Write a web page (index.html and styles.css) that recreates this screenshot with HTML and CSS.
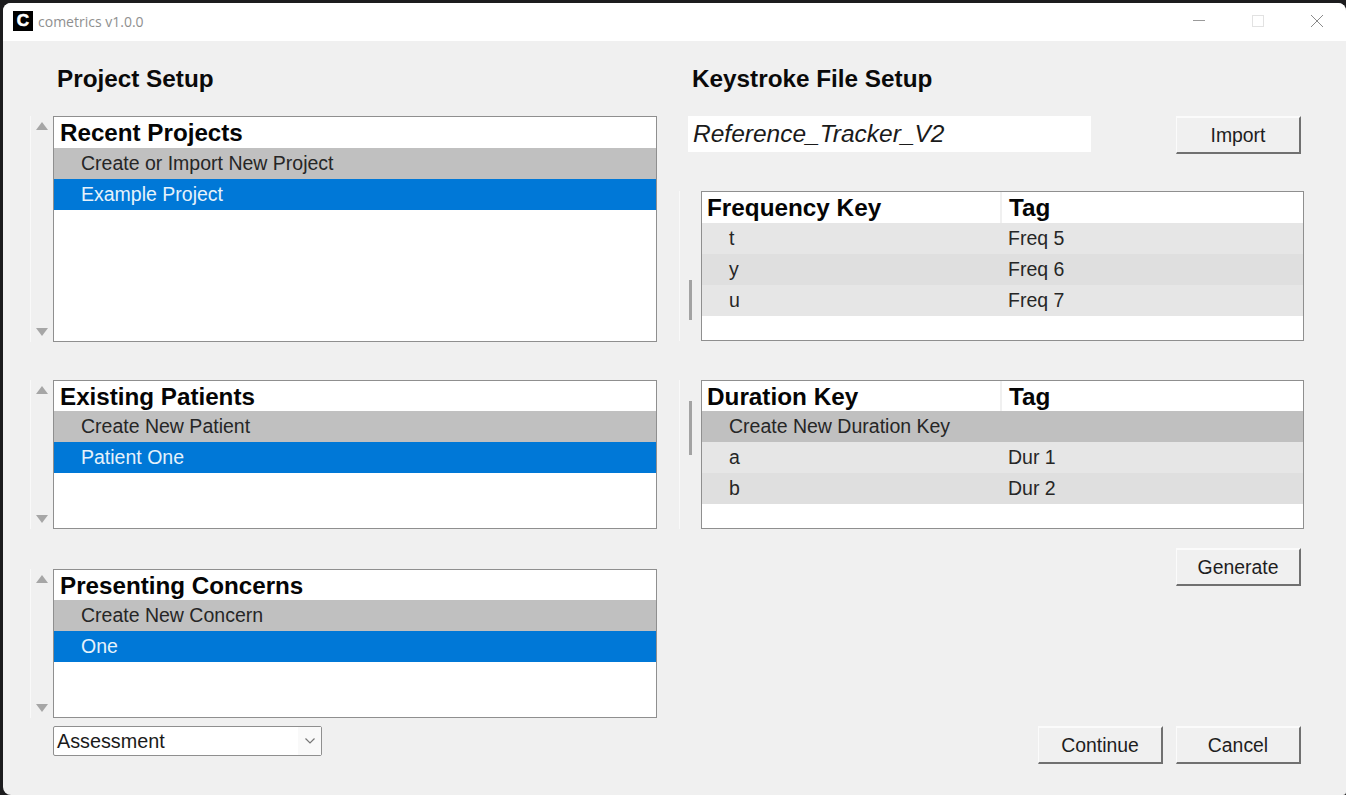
FILE: index.html
```html
<!DOCTYPE html>
<html lang="en">
<head>
<meta charset="utf-8">
<title>cometrics v1.0.0</title>
<link rel="stylesheet" href="styles.css">
</head>
<body>
<div class="window">
  <header class="titlebar">
    <div class="app-icon"><span class="app-letter">C</span></div>
    <span class="app-title">cometrics v1.0.0</span>
    <div class="controls">
      <svg class="ctl" width="46" height="38" viewBox="0 0 46 38"><path d="M17 18.5H29" stroke="#9a9a9a" fill="none"/></svg>
      <svg class="ctl" width="46" height="38" viewBox="0 0 46 38"><rect x="17.5" y="13.5" width="11" height="11" stroke="#e2e2e2" fill="none"/></svg>
      <svg class="ctl" width="46" height="38" viewBox="0 0 46 38"><path d="M17 13L29 25M29 13L17 25" stroke="#8a8a8a" fill="none"/></svg>
    </div>
  </header>
  <main class="content">
    <section class="col-left">
      <h2 class="heading heading-left">Project Setup</h2>
      <div class="list-row h226">
        <div class="arrows"><i class="up"></i><i class="down"></i></div>
        <div class="panel">
          <div class="head">Recent Projects</div>
          <div class="row grey">Create or Import New Project</div>
          <div class="row blue">Example Project</div>
        </div>
      </div>
      <div class="list-row h149">
        <div class="arrows"><i class="up"></i><i class="down"></i></div>
        <div class="panel">
          <div class="head short">Existing Patients</div>
          <div class="row grey">Create New Patient</div>
          <div class="row blue">Patient One</div>
        </div>
      </div>
      <div class="list-row h149 gap40">
        <div class="arrows"><i class="up"></i><i class="down"></i></div>
        <div class="panel">
          <div class="head short">Presenting Concerns</div>
          <div class="row grey">Create New Concern</div>
          <div class="row blue">One</div>
        </div>
      </div>
      <div class="select">
        <span class="select-text">Assessment</span>
        <span class="select-btn"><svg width="12" height="8" viewBox="0 0 12 8"><path d="M1.5 1.5L6 6L10.500 1.5" stroke="#777" stroke-width="1.200" fill="none"/></svg></span>
      </div>
    </section>
    <section class="col-right">
      <h2 class="heading">Keystroke File Setup</h2>
      <div class="file-row">
        <div class="file-name">Reference_Tracker_V2</div>
        <button class="btn">Import</button>
      </div>
      <div class="table-row freq">
        <div class="vscroll"><i class="thumb thumb-freq"></i></div>
        <div class="panel table">
          <div class="thead"><span class="c1">Frequency Key</span><span class="c2">Tag</span></div>
          <div class="trow odd"><span class="c1 ind">t</span><span class="c2">Freq 5</span></div>
          <div class="trow even"><span class="c1 ind">y</span><span class="c2">Freq 6</span></div>
          <div class="trow odd"><span class="c1 ind">u</span><span class="c2">Freq 7</span></div>
        </div>
      </div>
      <div class="table-row dur">
        <div class="vscroll"><i class="thumb thumb-dur"></i></div>
        <div class="panel table">
          <div class="thead short"><span class="c1">Duration Key</span><span class="c2">Tag</span></div>
          <div class="trow dark"><span class="c1 ind wide">Create New Duration Key</span></div>
          <div class="trow odd"><span class="c1 ind">a</span><span class="c2">Dur 1</span></div>
          <div class="trow even"><span class="c1 ind">b</span><span class="c2">Dur 2</span></div>
        </div>
      </div>
      <div class="gen-row"><button class="btn">Generate</button></div>
      <div class="foot-row"><button class="btn">Continue</button><button class="btn">Cancel</button></div>
    </section>
  </main>
</div>
</body>
</html>
```
FILE: styles.css
```css
* { box-sizing: border-box; }
html, body { margin: 0; height: 100%; }
body {
  width: 1346px;
  height: 795px;
  overflow: hidden;
  background: #1c1c1e;
  padding: 3px 0 0 3px;
  font-family: "Liberation Sans", Arial, sans-serif;
  color: #1e1e1e;
}
.window {
  width: 1343px;
  height: 792px;
  background: #f0f0f0;
  border-radius: 8px 8px 3px 8px;
  overflow: hidden;
  display: flex;
  flex-direction: column;
}
.titlebar {
  height: 38px;
  background: #fff;
  display: flex;
  align-items: center;
  padding: 0 0 2px 10px;
  flex: none;
}
.app-icon {
  width: 20px;
  height: 20px;
  background: #000;
  display: flex;
  align-items: center;
  justify-content: center;
}
.app-letter { color: #fff; font-weight: 700; font-size: 17px; line-height: 20px; -webkit-text-stroke: 0.6px #fff; }
.app-title { margin-left: 5px; font-size: 14px; color: #8f8f8f; font-family: "Open Sans", sans-serif; }
.controls { margin-left: auto; display: flex; margin-right: 6px; gap: 13px; }
.ctl { display: block; }
.content { display: flex; flex: 1; min-height: 0; }
.col-left { width: 654px; padding-left: 27px; flex: none; }
.col-right { width: 689px; flex: none; padding-left: 35px; }
.heading { margin: 0; font-size: 24.3px; line-height: 28px; font-weight: 700; color: #0a0a0a; padding-top: 24px; height: 75px; }
.heading-left { padding-left: 27px; }
.list-row { display: flex; }
.h226 { height: 226px; }
.h149 { height: 149px; margin-top: 38px; }
.gap40 { margin-top: 40px; }
.arrows {
  width: 23px;
  border-left: 1px solid #f9f9f9;
  padding: 6px 0 6px 5px;
  display: flex;
  flex-direction: column;
  justify-content: space-between;
  flex: none;
}
.arrows i { display: block; width: 0; height: 0; border-left: 6px solid transparent; border-right: 6px solid transparent; }
.up { border-bottom: 8px solid #a6a6a6; }
.down { border-top: 8px solid #a6a6a6; }
.panel { flex: 1; background: #fff; border: 1px solid #8f8f8f; overflow: hidden; }
.list-row .panel { max-width: 604px; }
.head { height: 31px; line-height: 32px; padding-left: 6px; font-size: 24.2px; font-weight: 700; color: #050505; }
.row { height: 31px; line-height: 30px; padding-left: 27px; font-size: 19.5px; }
.grey { background: #c0c0c0; color: #262626; }
.blue { background: #0078d7; color: #e6f2fb; }
.select {
  margin: 8px 0 0 23px;
  width: 269px;
  height: 30px;
  background: #fff;
  border: 1px solid #8f8f8f;
  border-radius: 2px;
  display: flex;
  align-items: center;
}
.select-text { flex: 1; padding-left: 3px; font-size: 19.8px; color: #1a1a1a; }
.select-btn { width: 23px; height: 100%; background: #f9f9f9; display: flex; align-items: center; justify-content: center; }
.file-row { display: flex; height: 38px; align-items: flex-start; justify-content: space-between; width: 613px; margin-left: -4px; }
.file-name { width: 403px; height: 36px; line-height: 36px; background: #fff; padding-left: 5px; font-size: 24.5px; font-style: italic; color: #1a1a1a; }
.btn {
  width: 125px;
  height: 38px;
  padding: 0;
  background: #f0f0f0;
  border: 1px solid;
  border-color: #fbfbfb #707070 #707070 #fbfbfb;
  border-width: 2px 2px 2px 1px;
  font-family: "Liberation Sans", Arial, sans-serif;
  font-size: 19.4px;
  color: #1e1e1e;
}
.table-row { display: flex; margin-left: -13px; height: 150px; }
.freq { margin-top: 37px; }
.dur { margin-top: 39px; height: 149px; }
.vscroll { width: 22px; flex: none; border-left: 1px solid #f9f9f9; padding-left: 9px; display: flex; }
.thumb { display: block; width: 2.5px; background: #a3a3a3; }
.thumb-freq { margin-top: 89px; height: 40px; }
.thumb-dur { margin-top: 21px; height: 54px; }
.table { max-width: 603px; }
.thead { height: 31px; display: flex; font-size: 24.3px; font-weight: 700; line-height: 32px; color: #050505; }
.thead .c1 { border-right: 2px solid #f0f0f0; padding-left: 5px; }
.thead .c2 { padding-left: 7px; }
.head.short, .thead.short { height: 30px; line-height: 31px; }
.c1 { width: 300px; flex: none; }
.c2 { padding-left: 6px; }
.trow { height: 31px; display: flex; line-height: 30px; font-size: 19.5px; color: #262626; }
.ind { padding-left: 27px; }
.wide { width: 100%; }
.odd { background: #e6e6e6; }
.even { background: #dfdfdf; }
.dark { background: #c0c0c0; }
.gen-row { margin: 19px 0 0 484px; height: 38px; }
.foot-row { margin: 140px 0 0 346px; display: flex; gap: 13px; }
```
